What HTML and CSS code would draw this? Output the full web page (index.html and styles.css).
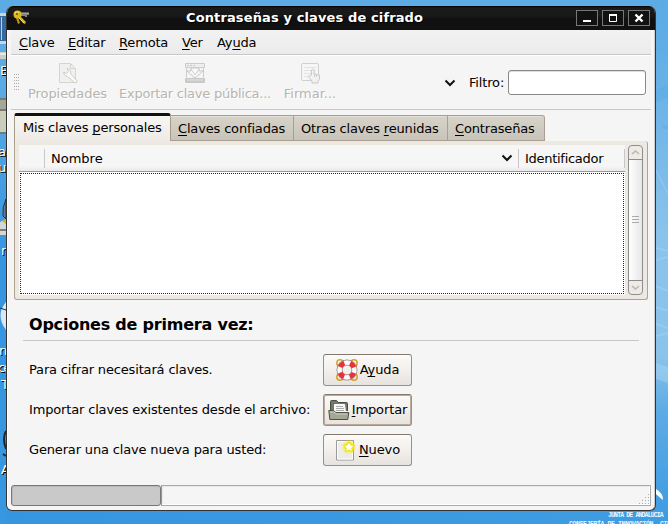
FILE: index.html
```html
<!DOCTYPE html>
<html lang="es">
<head>
<meta charset="utf-8">
<title>Contraseñas y claves de cifrado</title>
<link rel="stylesheet" href="styles.css">
</head>
<body>
<div class="desktop">
  <svg class="wallpaper" width="668" height="524" viewBox="0 0 668 524">
    <path d="M656 170L668 194" stroke="#a4d2f2" opacity=".6"/>
    <path d="M656 90l12-6v14l-12 4zM663 125h5v4h-5z" fill="#4fa5e3" opacity=".3"/>
    <path d="M656 248l12 3M656 260l12-3M656 286l12 5M656 307l12 4M656 324l12 4M656 336l12-3" stroke="#b5daf5" stroke-width="2" opacity=".35"/>
    <path d="M656 363l12 4v16l-12-4z" fill="#b5daf5" opacity=".4"/>
    <path d="M656 489q7 4 7 11q-5-4-7-6z" fill="#fff"/>
    <path d="M0 13h6v31H0z" fill="#c9d5df"/><path d="M0 16h6v25H0z" fill="#35699f"/><path d="M1 17h1v23H1z" fill="#b9d2e8"/>
    <path d="M0 52h6v7H0z" fill="#c9cdc8"/><path d="M0 53h6v2H0z" fill="#e8e8e5"/>
    <path d="M0 98h6v36H0z" fill="#767a70"/><path d="M0 100h6v9H0z" fill="#a5a79a"/><path d="M0 111h6v21H0z" fill="#cbcdbd"/>
    <path d="M6 199q-4 8-3 17l3 3z" fill="#607e9b" stroke="#263540"/><path d="M0 222l6-3v16H0z" fill="#d6d6d2"/><path d="M2 221l4-2v5z" fill="#d8ac2e"/><path d="M0 230h6" stroke="#222"/>
    <path d="M6 302q-11 13 0 28z" fill="#dce5f4"/><path d="M0 308l6 2" stroke="#252f3b"/>
    <path d="M6 431q-4 7 0 18M3 454l3 2" fill="none" stroke="#1c2730" stroke-width="2"/>
  </svg>
  <span class="label l1">E</span><span class="label l2">a</span><span class="label l3">u</span><span class="label l4">r</span>
  <span class="label l5">n</span><span class="label l6">ce</span><span class="label l7">T</span><span class="label l8">A</span>
  <div class="brand">JUNTA DE ANDALUCIA</div>
  <div class="brand brand-sub">CONSEJERÍA DE INNOVACIÓN, CIENCIA</div>

  <main class="window">
    <header class="titlebar">
      <svg class="keys" width="18" height="16" viewBox="0 0 18 16"><path d="M7 3h9v2h-2v2h-2V6H8" fill="#85857f"/><path d="M8 3h8" stroke="#b3b3ad"/><path d="M7 6l6 6-1 2-2-1-5-6" fill="#d4b51c"/><path d="M5 7l2 6-2 1-2-6z" fill="#b7960f"/><circle cx="4.500" cy="4.500" r="4" fill="#dcb923"/><path d="M1 4q2-3 5-2M6 8l5 5" fill="none" stroke="#f4df65"/><circle cx="4" cy="4" r="1" fill="#665508"/></svg>
      <h1>Contraseñas y claves de cifrado</h1>
      <div class="controls">
        <b><svg width="20" height="14"><path d="M6 10h8" stroke="#fff" stroke-width="2"/></svg></b>
        <b><svg width="20" height="14"><path d="M6.500 4h7v6.500h-7z" fill="none" stroke="#fff"/><path d="M6 4h8" stroke="#fff" stroke-width="2"/></svg></b>
        <b><svg width="20" height="14"><path d="M6.500 3.500l7 7m0-7l-7 7" stroke="#fff" stroke-width="2.400"/></svg></b>
      </div>
    </header>
    <nav class="menu"><span class="m1"><u>C</u>lave</span><span class="m2"><u>E</u>ditar</span><span class="m3"><u>R</u>emota</span><span class="m4"><u>V</u>er</span><span class="m5">Ay<u>u</u>da</span></nav>
    <div class="toolbar">
      <i class="grip"></i>
      <div class="tool t1"><svg width="22" height="22"><path d="M2.500 1.500h11l5 5v14h-16z" fill="#f0f0ef" stroke="#d4d4d2"/><path d="M13.500 1.500v5h5" fill="none" stroke="#d4d4d2"/><path d="M10 6.500l1.500 3-2 2-3-1.500q0 4 4 4.500l7.500 6.500 2.500-1.500-7-8q1-4-3.500-5z" fill="#fafafa" stroke="#ccccca"/></svg><span>Propiedades</span></div>
      <div class="tool t2"><svg width="22" height="22"><path d="M1.500 1.500h19v4h-19zM2.500 5.500v10M19.500 5.500v10" fill="#eee" stroke="#ccccca"/><path d="M3 3.500h2m1 0h2m1 0h2" stroke="#c8c8c5"/><path d="M7 6h8v3h4l-8 7-8-7h4z" fill="#f9f9f9" stroke="#c8c8c6"/><path d="M7 7l4 6 4-6" fill="none" stroke="#d0d0ce"/><rect x="1" y="16" width="20" height="5" rx="1" fill="#c9c9c7"/><path d="M3 18h16" stroke="#e4e4e2"/></svg><span>Exportar clave pública...</span></div>
      <div class="tool t3"><svg width="22" height="22"><rect x="2.500" y="1.500" width="17" height="17" rx="1.500" fill="#f6f6f6" stroke="#d0d0ce"/><path d="M5 5.500h12M5 8.500h12M5 11.500h12M5 14.500h10" stroke="#e3e3e1"/><path d="M12.500 13V8q1-2 2.500 0v4l5.500 1v4l-1.500 2v2h-6v-2l-3.500-4 1-1.500z" fill="#f1f1f0" stroke="#c9c9c7"/><path d="M15.500 12v3m2-3v3" stroke="#ccc"/></svg><span>Firmar...</span></div>
      <svg class="chev" width="12" height="8"><path d="M1.500 1.500l4.500 4.500 4.500-4.500" fill="none" stroke="#111" stroke-width="2"/></svg>
      <label>Filtro:</label><input type="text" aria-label="Filtro">
    </div>
    <section class="notebook">
      <div class="tabs"><span class="tab active">Mis claves <u>p</u>ersonales</span><span class="tab b"><u>C</u>laves confiadas</span><span class="tab c">Otras claves <u>r</u>eunidas</span><span class="tab d"><u>C</u>ontraseñas</span></div>
      <div class="page">
        <div class="tree">
          <div class="columns"><span class="blank"></span><span class="name">Nombre<svg width="12" height="8"><path d="M1.500 1.500l4.500 4.500 4.500-4.500" fill="none" stroke="#111" stroke-width="2"/></svg></span><span class="ident">Identificador</span></div>
          <div class="rows"></div>
        </div>
        <div class="scroll">
          <i><svg width="13" height="13"><path d="M3 8l3.500-3L10 8" fill="none" stroke="#bcb5ae" stroke-width="1.500"/></svg></i>
          <div class="thumb"><svg width="7" height="8"><path d="M0 .5h7M0 3.500h7M0 6.500h7" stroke="#aaa"/></svg></div>
          <i><svg width="13" height="13"><path d="M3 5l3.500 3L10 5" fill="none" stroke="#bcb5ae" stroke-width="1.500"/></svg></i>
        </div>
      </div>
    </section>
    <section class="first">
      <h2>Opciones de primera vez:</h2>
      <div class="option"><span>Para cifrar necesitará claves.</span><button><svg width="22" height="22"><g fill="none" stroke="#d1a62b" stroke-width="1.500"><circle cx="4" cy="4" r="3.200"/><circle cx="18" cy="4" r="3.200"/><circle cx="4" cy="18" r="3.200"/><circle cx="18" cy="18" r="3.200"/></g><circle cx="11" cy="11" r="7.500" fill="none" stroke="#8d8585" stroke-width="6"/><circle cx="11" cy="11" r="7.500" fill="none" stroke="#fafafa" stroke-width="4.500"/><circle cx="11" cy="11" r="7.500" fill="none" stroke="#ed3038" stroke-width="5" stroke-dasharray="5.890 5.890" stroke-dashoffset="-2.950"/></svg><span>A<u>y</u>uda</span></button></div>
      <div class="option"><span>Importar claves existentes desde el archivo:</span><button class="default"><svg width="22" height="22"><path d="M2.500 12V2.500q0-1 1-1h5l2 2h8q1 0 1 1V12" fill="#727768" stroke="#484d43"/><path d="M6.500 5.500h10l1 8h-11z" fill="#f8f8f5" stroke="#fff"/><path d="M8 7.500h7M8 9.500h8M8 11.500h8" stroke="#aaa"/><path d="M.8 11.500h5l2 2h13l-1 7H1.800z" fill="#a3a794" stroke="#4c5145"/><path d="M2 13h4l2 2h11" fill="none" stroke="#c7cbb9"/></svg><span><u>I</u>mportar</span></button></div>
      <div class="option"><span>Generar una clave nueva para usted:</span><button><svg width="22" height="22"><defs><radialGradient id="glow"><stop offset=".5" stop-color="#fff000"/><stop offset="1" stop-color="#fff000" stop-opacity="0"/></radialGradient></defs><path d="M1.500 1.500h17v19.500h-17z" fill="#efefed" stroke="#999"/><path d="M2.500 2.500h15v17.500h-15z" fill="#ecedeb" stroke="#fff"/><circle cx="14" cy="8" r="7.500" fill="url(#glow)"/><path d="M14 2.500l1.700 3.400 3.800.5-2.800 2.600.8 3.800-3.500-1.900-3.500 1.900.8-3.800-2.800-2.600 3.800-.5z" fill="#fff" stroke="#e4d600" stroke-width=".8"/></svg><span><u>N</u>uevo</span></button></div>
    </section>
    <footer><div class="progress"></div><div class="status"><svg width="12" height="12" fill="#aaa"><path d="M10 1h1v1h-1zM10 4h1v1h-1zM7 4h1v1H7zM10 7h1v1h-1zM7 7h1v1H7zM4 7h1v1H4zM10 10h1v1h-1zM7 10h1v1H7zM4 10h1v1H4zM1 10h1v1H1z"/></svg></div></footer>
  </main>
</div>
</body>
</html>
```
FILE: styles.css
```css
* { box-sizing: border-box; }
body { margin: 0; font: 13px/16px "DejaVu Sans", sans-serif; letter-spacing: -.16px; color: #000; }
u { text-decoration: underline; text-underline-offset: 2px; text-decoration-thickness: 1px; text-decoration-skip-ink: none; }
.desktop { position: relative; width: 668px; height: 524px; overflow: hidden; padding: 6px 0 0 6px; background: linear-gradient(#5cabe5 0, #5cabe5 15%, #3595e0 50%, #3897e0 100%) 0 0 / 6px 100% no-repeat, linear-gradient(90deg, #3595df, rgba(53,149,223,0)) 0 100% / 600px 14px no-repeat, linear-gradient(#5cabe5 0, #61aee6 10%, #8bc3eb 45%, #8bc3eb 68%, #5eace5 78%, #429de2 96%, #3f9be1 100%); }
.wallpaper { position: absolute; left: 0; top: 0; }
.label { position: absolute; left: 0; color: #fff; text-shadow: 1px 1px #000; }
.l1 { top: 63px; left: 0; } .l2 { top: 144px; left: -2px; } .l3 { top: 160px; left: -2px; } .l4 { top: 243px; left: 1px; }
.l5 { top: 343px; left: -1px; } .l6 { top: 360px; left: -8px; } .l7 { top: 377px; left: 1px; } .l8 { top: 462px; left: 1px; }
.l6 { left: -2px; letter-spacing: -2px; }
.brand { position: absolute; left: 608px; top: 511px; color: #eef6fc; font: bold 6.5px/9px "Liberation Mono", monospace; letter-spacing: -.85px; white-space: nowrap; }
.brand-sub { left: 569px; top: 520px; letter-spacing: -.4px; }

.window { position: relative; width: 650px; height: 505px; border: 1px solid #333; border-top: 0; border-radius: 7px 7px 6px 6px; background: #f5f5f5; box-shadow: inset -1px 0 #ccc, inset 1px 0 #fff; overflow: hidden; display: flex; flex-direction: column; padding: 0 4px; }
.titlebar { height: 24px; flex: none; margin: 0 -4px; background: linear-gradient(#000 0, #1b1b1b 2px, #171717 11px, #101010 12px, #111 100%); display: flex; align-items: center; padding: 0 5px 0 6px; }
.titlebar h1 { margin: 0; flex: 1; padding-left: 155px; font: bold 13px/22px "DejaVu Sans", sans-serif; letter-spacing: .12px; color: #fff; text-shadow: 1px 1px #000; white-space: nowrap; }
.controls { display: flex; gap: 4px; }
.controls b { width: 22px; height: 16px; border: 1px solid #777; background: #111; display: flex; }
.menu { height: 25px; flex: none; display: flex; padding: 5px 0 0 8px; border-bottom: 1px solid #c8c8c8; background: linear-gradient(#f2f2f2, #ebebeb); }
.menu span { flex: none; white-space: nowrap; }
.m1 { width: 49px; } .m2 { width: 51px; } .m3 { width: 63px; } .m4 { width: 35px; }
.toolbar { height: 55px; flex: none; display: flex; align-items: center; border-bottom: 1px solid #c8c8c8; border-top: 1px solid #fff; }
.grip { width: 5px; height: 17px; margin-left: 3px; background: repeating-linear-gradient(#f5f5f5 0 1px, transparent 1px 3px), repeating-linear-gradient(90deg, #bbb 0 1px, #f5f5f5 1px 2px); }
.grip { background: repeating-linear-gradient(transparent 0 1px, #f5f5f5 1px 3px), repeating-linear-gradient(90deg, #aaa 0 1px, #f5f5f5 1px 2px); }
.tool { display: flex; flex-direction: column; align-items: center; gap: 2px; color: #b7b5ae; text-shadow: 1px 1px #fff; white-space: nowrap; height: 41px; }
.tool svg { flex: none; }
.t1 { width: 79px; margin-left: 9px; letter-spacing: -.06px; } .t2 { width: 152px; margin-left: 12px; letter-spacing: -.24px; } .t3 { width: 52px; margin-left: 13px; letter-spacing: 0; }
.chev { margin-left: auto; }
.toolbar label { margin: 0 5px 0 13px; width: 34px; white-space: nowrap; }
.toolbar input { width: 138px; height: 25px; margin-right: 5px; border: 1px solid #888; border-radius: 3px; background: #fff; box-shadow: inset 0 1px #ddd; outline: 0; }

.notebook { margin: 3px 3px 0; height: 187px; flex: none; }
.tabs { height: 28px; display: flex; align-items: flex-end; }
.tab { height: 26px; padding: 5px 0 0 7px; border: 1px solid #a99f90; border-left-width: 0; background: linear-gradient(#d8d3c9, #c9c4b9); white-space: nowrap; box-shadow: inset 0 1px #e3dfd6; }
.tab.active { width: 157px; height: 28px; padding-top: 4px; padding-left: 8px; border: 1px solid #a99a88; border-top: 3px solid #111; border-bottom: 0; border-radius: 3px 3px 0 0; background: linear-gradient(#f7f6f3, #eeebe6); box-shadow: none; }
.b { width: 123px; } .c { width: 154px; } .d { width: 97px; border-radius: 0 3px 0 0; }
.page { height: 159px; border: 1px solid #b0a28e; border-top: 0; border-radius: 0 3px 3px 3px; background: #ede9e2; display: flex; padding: 4px; }
.tree { width: 606px; display: flex; flex-direction: column; }
.columns { height: 27px; display: flex; align-items: center; background: linear-gradient(#f6f6f6 0 80%, #e9e9e9); border-bottom: 1px solid #999; }
.blank { width: 26px; height: 19px; border-right: 1px solid #c8c8c8; }
.name { width: 474px; height: 19px; line-height: 19px; padding: 0 5px 0 6px; border-right: 1px solid #c8c8c8; display: flex; justify-content: space-between; align-items: center; letter-spacing: 0; }
.ident { flex: 1; height: 19px; line-height: 19px; padding-left: 6px; border-right: 1px solid #c8c8c8; letter-spacing: -.28px; }
.rows { flex: 1; margin: 1px; background: #fff; border: 1px dotted #222; outline: 1px solid #fff; }
.scroll { width: 15px; margin-left: 3px; border: 1px solid #8d8d8d; border-radius: 4px; overflow: hidden; background: #eeeae6; display: flex; flex-direction: column; }
.scroll i { height: 13px; flex: none; display: flex; }
.thumb { flex: 1; border: solid #8d8d8d; border-width: 1px 0; background: linear-gradient(90deg, #fff, #e6e6e6); display: flex; align-items: center; justify-content: center; }
.first { padding: 12px 12px 0; height: 185px; }
h2 { margin: 0 0 13px; height: 29px; padding-left: 6px; font: bold 16px/25px "DejaVu Sans", sans-serif; letter-spacing: -.22px; border-bottom: 1px solid #c8c8c8; white-space: nowrap; }
.option { height: 32px; margin-bottom: 8px; display: flex; align-items: center; padding-left: 6px; }
.option > span { width: 294px; white-space: nowrap; }
button { width: 89px; height: 32px; padding: 0; margin: 0; border: 1px solid #9b9084; border-top-color: #85796e; border-radius: 3px; background: linear-gradient(#fbfaf9, #f2efec 50%, #e7e3de); display: flex; align-items: center; justify-content: center; gap: 2px; font: inherit; letter-spacing: -.1px; color: #000; }
.default { box-shadow: inset 0 0 0 1px #b9aa9c; }
footer { height: 21px; flex: none; margin-top: auto; margin-bottom: 4px; display: flex; }
.progress { width: 150px; border: 1px solid #777; border-radius: 3px; background: #c9c9c9; box-shadow: inset 1px 1px #b9b9b9; }
.status { flex: 1; border: 1px solid #aaa; border-left-color: #999; box-shadow: inset -1px -1px #fff, inset 1px 1px #e8e8e8; display: flex; justify-content: flex-end; align-items: flex-end; }
```
